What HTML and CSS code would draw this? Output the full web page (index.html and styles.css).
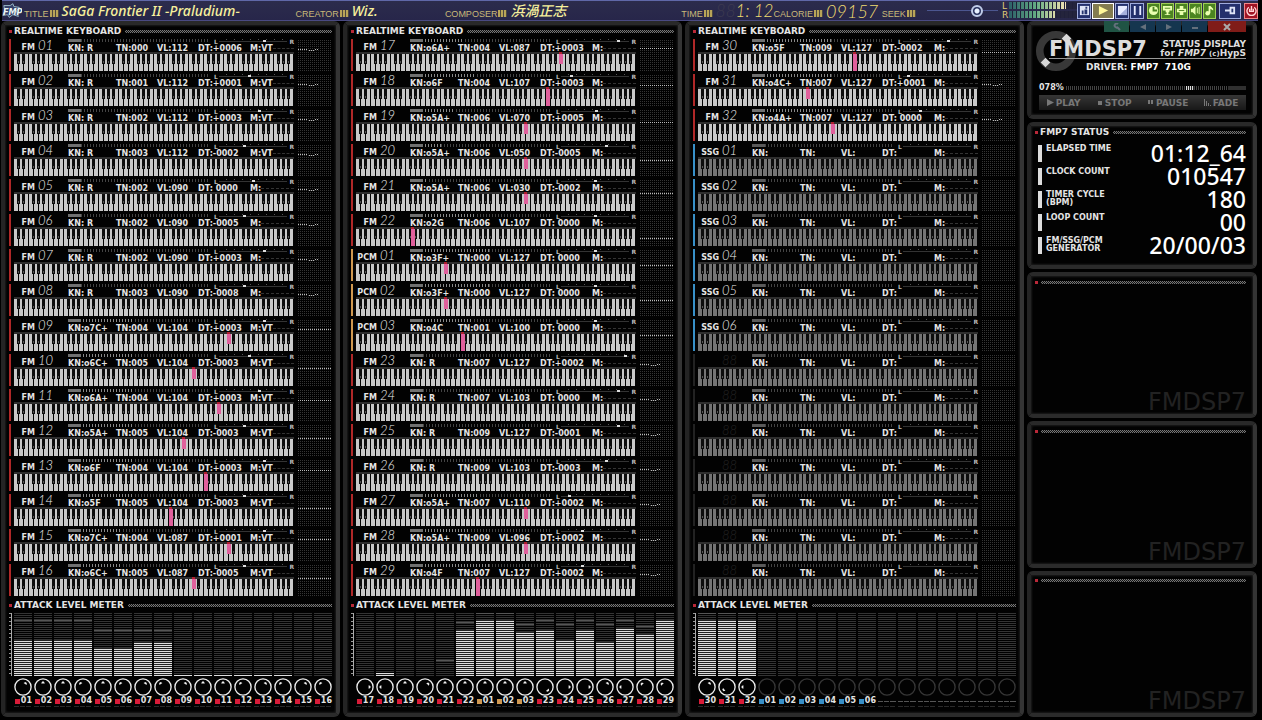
FILE: index.html
```
<!doctype html>
<html lang="en">
<head>
<meta charset="utf-8">
<title>FMDSP7</title>
<link rel="stylesheet" href="styles.css">
</head>
<body>
<svg class="defs" aria-hidden="true">
	<defs>
		<!-- one octave, 7 white keys 5px each -->
		<pattern id="keys" width="35" height="17" patternUnits="userSpaceOnUse">
			<path fill="#c8c8c8" d="M0 0h4v17h-4zM5 0h4v17h-4zM10 0h4v17h-4zM15 0h4v17h-4zM20 0h4v17h-4zM25 0h4v17h-4zM30 0h4v17h-4z"/>
			<path fill="#0c0c0c" d="M3 0h3v10h-3zM8 0h3v10h-3zM18 0h3v10h-3zM23 0h3v10h-3zM28 0h3v10h-3z"/>
			<path fill="#555" d="M4 7h1v2h-1zM9 7h1v2h-1zM19 7h1v2h-1zM24 7h1v2h-1zM29 7h1v2h-1z"/>
		</pattern>
	</defs>
</svg>

<header class="topbar">
	<svg class="fmp" viewBox="0 0 22 18" aria-hidden="true">
		<path d="M2 3h7l3-2 1 3 6 1-3 4 2 6-6-2-4 3-2-3-5 1 2-5z" fill="#34406a" stroke="#9fc0cc"/>
		<text x="1" y="13">FMP</text>
	</svg>
	<div class="info title"><span class="tag">TITLE</span><i class="bars"></i><b>SaGa Frontier II −Praludium−</b></div>
	<div class="info creator"><span class="tag">CREATOR</span><i class="bars"></i><b>Wiz.</b></div>
	<div class="info composer"><span class="tag">COMPOSER</span><i class="bars"></i><b lang="ja">浜渦正志</b></div>
	<div class="info time"><span class="tag">TIME</span><i class="bars"></i><span class="lcd"><span class="ghost" aria-hidden="true">88</span>1: 12</span></div>
	<div class="info calorie"><span class="tag">CALORIE</span><i class="bars"></i><span class="lcd">09157</span></div>
	<div class="info seek"><label class="tag" for="seek">SEEK</label><i class="bars"></i><input type="range" id="seek" min="0" max="100" value="74"></div>
	<div class="lr"><span>L</span><i class="led"></i><span>R</span><i class="led short"></i></div>
	<div class="buttons">
		<button class="btn" aria-label="Info"><svg viewBox="0 0 12 12"><path d="M1 1h10v10H1z" fill="#dfe4f6"/><path d="M7 2h2v2H7zM6 5h3v5H6zM3 6h2v4H3z" fill="#26356e"/></svg></button>
		<button class="btn wide play" aria-label="Play"><svg viewBox="0 0 12 12"><path d="M1 1l10 5-10 5z" fill="#fff79a"/></svg></button>
		<button class="btn" aria-label="Stop"><svg viewBox="0 0 12 12"><path d="M1 1h10v10H1z" fill="#e8ebff"/><path d="M11 3v8H3z" fill="#a6b0dc"/></svg></button>
		<button class="btn" aria-label="Pause"><svg viewBox="0 0 12 12"><path d="M2 1h2v10H2zM8 1h2v10H8z" fill="#e8ebff"/></svg></button>
		<button class="btn green first" aria-label="Timer"><svg viewBox="0 0 12 12"><circle cx="6" cy="6" r="5" fill="#eaffb0"/><path d="M6 2v4h4" stroke="#4b8420" stroke-width="2" fill="none"/></svg></button>
		<button class="btn green" aria-label="Trophy"><svg viewBox="0 0 12 12"><path d="M1 1h10v5H8v2H4V6H1zM5 8h2v2h2v1H3v-1h2z" fill="#eaffb0"/><path d="M3 3h6v1H3z" fill="#4b8420"/></svg></button>
		<button class="btn green" aria-label="Move"><svg viewBox="0 0 12 12"><path d="M4 4V1h4v3h3v4H8v3H4V8H1V4z" fill="#eaffb0"/><path d="M3 6h6" stroke="#4b8420"/></svg></button>
		<button class="btn green" aria-label="Volume"><svg viewBox="0 0 12 12"><path d="M1 4h2l3-3v10L3 8H1z" fill="#eaffb0"/><path d="M8 3v6M10 2v8" stroke="#eaffb0"/></svg></button>
		<button class="btn green" aria-label="Note"><svg viewBox="0 0 12 12"><path d="M5 1h2l3 3v2L7 4v5H5z" fill="#eaffb0"/><circle cx="4" cy="9" r="2.5" fill="#eaffb0"/></svg></button>
		<button class="btn wide first" aria-label="Compact"><svg viewBox="0 0 12 12"><path d="M0 5h5V2h6v8H5V7H0z" fill="#dfe4f6"/><path d="M7 4h2v4H7z" fill="#26356e"/></svg></button>
		<button class="btn red first" aria-label="Power"><svg viewBox="0 0 12 12"><path d="M3 2.5a5 5 0 1 0 6 0M6 1v5M4 4v3h4V4" stroke="#ffd6d6" stroke-width="1.5" fill="none"/></svg></button>
	</div>
</header>

<main>
	<section class="panel tracks"></section>
	<section class="panel tracks"></section>
	<section class="panel tracks"></section>

	<aside>
		<section class="panel display">
			<div class="tabs">
				<button class="tab tool" aria-label="Settings"><svg viewBox="0 0 10 8"><path d="M8 7L5 4M6 1a2 2 0 1 0 0 3" stroke="currentColor" stroke-width="2" fill="none"/></svg></button>
				<button class="tab" aria-label="Previous"><svg viewBox="0 0 10 8"><path d="M8 1v6L2 4z" fill="currentColor"/></svg></button>
				<button class="tab" aria-label="Next"><svg viewBox="0 0 10 8"><path d="M2 1v6l6-3z" fill="currentColor"/></svg></button>
				<button class="tab" aria-label="Minimize"><svg viewBox="0 0 10 8"><path d="M2 4h6v2H2z" fill="currentColor"/></svg></button>
				<button class="tab close" aria-label="Close"><svg viewBox="0 0 10 8"><path d="M2 1l6 6M8 1L2 7" stroke="currentColor" stroke-width="2"/></svg></button>
			</div>
			<div class="logo">
				<svg class="ring" viewBox="0 0 44 44" aria-hidden="true">
					<circle cx="22" cy="22" r="17" fill="none" stroke="#383838" stroke-width="8"/>
					<path d="M33 4l5 5-5 5-5-5zM11 29l5 5-5 5-5-5z" fill="#d8d8d8"/>
				</svg>
				<h1>FMDSP7</h1>
				<p class="sub">STATUS DISPLAY<br>for <em>FMP7</em> <small>(c)</small>HypS</p>
			</div>
			<p class="driver">DRIVER: <b>FMP7&nbsp; 710G</b></p>
			<div class="cpu"><span>078%</span><i class="cpubar"></i></div>
			<div class="controls">
				<button><svg viewBox="0 0 7 7"><path d="M0 0v7l7-3.500z"/></svg>PLAY</button>
				<button><svg viewBox="0 0 7 7"><path d="M2 2h4v4H2z"/></svg>STOP</button>
				<button><svg viewBox="0 0 7 7"><path d="M1 1h2v4H1zM4 1h2v4H4z"/></svg>PAUSE</button>
				<button><svg viewBox="0 0 7 7"><path d="M0 0h1v7H0zM2 2h1v5H2zM4 4h1v3H4zM6 6h1v1H6z"/></svg>FADE</button>
			</div>
		</section>

		<section class="panel">
			<h2>FMP7 STATUS</h2>
			<dl class="status">
				<div><dt>ELAPSED TIME</dt><dd>01:12_64</dd></div>
				<div><dt>CLOCK COUNT</dt><dd>010547</dd></div>
				<div><dt>TIMER CYCLE<br>(BPM)</dt><dd>180</dd></div>
				<div><dt>LOOP COUNT</dt><dd>00</dd></div>
				<div><dt>FM/SSG/PCM<br>GENERATOR</dt><dd>20/00/03</dd></div>
			</dl>
		</section>

		<section class="panel empty"><h2></h2><p class="mark">FMDSP7</p></section>
		<section class="panel empty"><h2></h2><p class="mark">FMDSP7</p></section>
		<section class="panel empty"><h2></h2><p class="mark">FMDSP7</p></section>
	</aside>
</main>
<script src="app.js"></script>
</body>
</html>
```
FILE: styles.css
```
* {
	box-sizing: border-box;
}
body {
	margin: 0;
	min-height: 100vh;
	display: flex;
	flex-direction: column;
	background: #000;
	color: #e4e4e4;
	font: bold 9px/8px "DejaVu Sans", sans-serif;
}
h1, h2, p, dl, dd {
	margin: 0;
}
button {
	padding: 0;
	border: 0;
	background: none;
	color: inherit;
	font: inherit;
}
.defs {
	position: absolute;
	width: 0;
	height: 0;
}

/* top bar */
.topbar {
	display: flex;
	align-items: center;
	height: 21px;
	margin: 0 4px 0 2px;
	background: linear-gradient(#2c2c4c, #27264a);
	border-top: 1px solid #6068a8;
	border-bottom: 1px solid #4a4a82;
}
.fmp {
	width: 20px;
	height: 18px;
	margin-right: 2px;
}
.fmp text {
	font: italic bold 9px "DejaVu Sans", sans-serif;
	fill: #e8f4f4;
}
.info {
	display: flex;
	align-items: center;
	min-width: 0;
	height: 19px;
	white-space: nowrap;
}
.title { flex: 271; }
.creator { flex: 149; }
.composer { flex: 236; }
.time { flex: 92; }
.calorie { flex: 108; }
.seek { flex: 120; }
.tag {
	padding-top: 6px;
	font: 9px/10px "Liberation Sans", sans-serif;
	color: #c8b878;
}
.bars {
	flex: none;
	width: 9px;
	height: 7px;
	margin: 6px 3px 0 1px;
	background: repeating-linear-gradient(90deg, #b8a458 0 2px, #4c4640 2px 3px);
}
.info b {
	font: italic 500 14px/18px "Noto Sans", "Noto Sans CJK JP", sans-serif;
	color: #f6f09c;
}
.lcd {
	flex: 1;
	text-align: left;
	font: italic 300 18px/18px Lato, sans-serif;
	color: #f0dc70;
}
.time .lcd {
	font-size: 17px;
}
.lcd .ghost {
	color: #3c3a50;
}
.seek input {
	appearance: none;
	flex: 1;
	min-width: 0;
	height: 14px;
	margin: 0 4px 0 8px;
	background: linear-gradient(#4c5690, #4c5690) center / 100% 1px no-repeat;
}
.seek input::-webkit-slider-thumb {
	appearance: none;
	width: 12px;
	height: 12px;
	border: 2px solid #c0cce8;
	border-radius: 50%;
	background: radial-gradient(#e8f0ff 0 2px, #28305c 3px);
}
.lr {
	display: grid;
	grid-template-columns: 7px 68px;
	row-gap: 1px;
	font: 9px/8px "DejaVu Sans", sans-serif;
	color: #e0cc78;
}
.led {
	height: 7px;
	background:
		repeating-linear-gradient(90deg, transparent 0 3px, #20203a 3px 4px),
		linear-gradient(90deg, #2c6068, #64ac84 40%, #d8d8a8 75%, #f0e0b8 84%, #24243c 84%);
}
.led.short {
	background:
		repeating-linear-gradient(90deg, transparent 0 3px, #20203a 3px 4px),
		linear-gradient(90deg, #2c6068, #64ac84 40%, #d8d8a8 67%, #24243c 67%);
}
.buttons {
	display: flex;
	gap: 1px;
}
.btn {
	display: flex;
	align-items: center;
	justify-content: center;
	width: 14px;
	height: 16px;
	border: 1px solid #a0acdc;
	background: #24306c;
}
.btn svg {
	width: 11px;
	height: 11px;
}
.btn.wide { width: 22px; }
.btn.first { margin-left: 2px; }
.btn.play {
	border-color: #fff;
	background: #847c50;
}
.btn.green {
	width: 13px;
	border-color: #a0cc58;
	background: #4b8420;
}
.btn.red {
	border-color: #f08888;
	background: #a01424;
}

/* panels */
main {
	flex: 1;
	display: grid;
	grid-template-columns: 339fr 339fr 339fr 230fr;
	gap: 3px;
	padding: 0 5px 3px 1px;
}
aside {
	display: grid;
	grid-template-rows: 98px 147px 1fr 1fr 1fr;
	gap: 3px;
}
.panel {
	min-width: 0;
	padding: 0 4px;
	border: 4px solid;
	border-color: #292929 #343434 #2b2b2b #242424;
	border-radius: 6px;
	background: #020202;
	box-shadow: inset 0 0 2px 1px #1c1c1c;
}
aside .panel {
	padding-right: 7px;
}
h2 {
	display: flex;
	align-items: center;
	height: 12px;
	font-size: 9px;
	line-height: 12px;
	white-space: nowrap;
}
h2::before {
	content: "";
	width: 3px;
	height: 3px;
	margin-right: 2px;
	background: #b82838;
}
h2::after {
	content: "";
	flex: 1;
	height: 3px;
	margin-left: 4px;
	background: repeating-conic-gradient(#777 0 25%, #111 0 50%) 0 0 / 2px 2px;
}

/* channels */
.channels {
	margin-top: 2px;
}
.channel {
	display: grid;
	grid-template-columns: 2px 280px 1fr;
	column-gap: 3px;
	height: 32px;
	margin-bottom: 3px;
}
.side { background: #222; }
.FM .side, .FM i { background: #b02828; }
.PCM .side, .PCM i { background: #d09850; }
.SSG .side, .SSG i { background: #3890c8; }
.head {
	display: grid;
	grid-template-columns: 54px 1fr;
	height: 12px;
}
.ident {
	display: flex;
	height: 12px;
}
.kind {
	width: 21px;
	padding-top: 5px;
	font-size: 8px;
	text-align: right;
}
.num {
	display: grid;
	margin-left: 3px;
	font: italic 300 13px/12px Lato, sans-serif;
	color: #eee;
}
.num .ghost {
	color: #242424;
}
.gauge {
	display: flex;
	height: 5px;
	font-size: 6px;
	line-height: 5px;
	color: #bbb;
}
.level {
	width: 141px;
	height: 3px;
	margin-right: 5px;
	background:
		repeating-linear-gradient(90deg, transparent 0 1px, #000 1px 3px) 13px 0 no-repeat,
		linear-gradient(#444, #444);
}
.level b {
	display: block;
	height: 3px;
	min-width: 13px;
	background:
		linear-gradient(#707070, #707070) 0 0 / 13px 3px no-repeat,
		repeating-linear-gradient(90deg, #888 0 1px, #000 1px 3px);
}
.SSG .level b, .off .level b { opacity: .5; }
.pan {
	position: relative;
	flex: 1;
	height: 4px;
	margin: 0 2px 0 1px;
	background:
		linear-gradient(#333, #333) 0 2px / 100% 1px no-repeat,
		repeating-linear-gradient(90deg, transparent 0 7px, #555 7px 8px) 0 0 / 100% 1px no-repeat;
}
.pan b {
	position: absolute;
	top: 1px;
	width: 3px;
	height: 2px;
	background: #ddd;
}
.values {
	display: grid;
	grid-template-columns: 48px 41px 41px 52px 1fr;
	font-size: 8px;
	line-height: 9px;
	white-space: pre;
}
.fx {
	display: flex;
	align-items: center;
}
.fx::after {
	content: "";
	flex: 1;
	border-top: 1px dashed #333;
}
.rail {
	height: 2px;
	margin-top: 1px;
	background: #2e2e2e;
}
.keys {
	display: block;
	width: 280px;
	height: 19px;
	margin-top: -2px;
}
.scope {
	width: 100%;
	height: 32px;
	background:
		repeating-linear-gradient(90deg, #000 0 1px, transparent 1px 2px),
		repeating-linear-gradient(#000 0 1px, #343434 1px 2px);
}

/* attack meter */
.meter {
	display: grid;
	grid-template-columns: 3px 1fr;
	column-gap: 2px;
	margin-top: 2px;
}
.ruler {
	height: 63px;
	border-right: 1px solid #aaa;
	background: repeating-linear-gradient(#999 0 1px, #000 1px 4px);
}
.cols {
	display: grid;
	grid-template-columns: repeat(16, 1fr);
	column-gap: 2px;
}
.col {
	min-width: 0;
	font-size: 8px;
}
.bar {
	position: relative;
	display: flex;
	align-items: flex-end;
	height: 63px;
	background: repeating-linear-gradient(#343434 0 1px, #000 1px 2px);
}
.bar b {
	width: 100%;
	background: repeating-linear-gradient(0deg, #ddd 0 1px, #222 1px 2px);
}
.bar u {
	position: absolute;
	width: 100%;
	height: 1px;
	background: #555;
}
.knob {
	display: block;
	width: 100%;
	height: 20px;
	margin-top: 1px;
	color: #eee;
}
.off .knob, .SSG .knob { color: #363636; }
.name {
	display: flex;
	align-items: center;
	gap: 1px;
	height: 8px;
}
.name i {
	width: 5px;
	height: 5px;
	margin-left: 1px;
}
.col.FM i { background: #d81c38; }
.off .name {
	background: linear-gradient(90deg, #555 5px, #000 5px 6px, #555 6px 11px, #000 11px 12px, #555 12px) center / 100% 1px no-repeat;
}
.foot {
	height: 1px;
	margin-top: 1px;
	background: repeating-linear-gradient(90deg, #2a2a2a 0 5px, #000 5px 6px);
}

/* right side */
.tabs {
	display: flex;
	gap: 1px;
	justify-content: flex-end;
	height: 11px;
	margin-top: -4px;
}
.tab {
	flex: none;
	width: 25px;
	background: #15364f;
	color: #64707c;
}
.tab svg {
	display: block;
	width: 10px;
	height: 8px;
	margin: 0 auto;
}
.tab.tool { background: #205444; }
.tab.close {
	width: 38px;
	background: #801c18;
	color: #aaa;
}
.logo {
	display: flex;
	height: 38px;
	margin-top: -2px;
	color: #ddd;
}
.ring {
	flex: none;
	width: 42px;
	height: 42px;
	margin-right: -28px;
}
.logo h1 {
	z-index: 1;
	margin-top: 9px;
	font: bold 21px/20px "DejaVu Sans", sans-serif;
	height: 20px;
	border-bottom: 1px solid #999;
}
.sub {
	z-index: 1;
	flex: 1;
	height: 20px;
	margin-top: 9px;
	padding-top: 1px;
	border-bottom: 1px solid #999;
	line-height: 9px;
	text-align: right;
	white-space: nowrap;
}
.sub small {
	font-size: 7px;
}
.driver {
	margin-top: -5px;
	padding-right: 4px;
	text-align: center;
}
.driver b { color: #fff; }
.cpu {
	display: flex;
	align-items: center;
	margin: 13px 0 0 4px;
	font-size: 8px;
}
.cpubar {
	flex: 1;
	height: 4px;
	margin-left: 2px;
	background:
		linear-gradient(#303030, #303030) 100% 0 / 18px 100% no-repeat,
		repeating-linear-gradient(90deg, #ddd 0 1px, #222 1px 2px) 70% 0 / 8px 100% no-repeat,
		repeating-linear-gradient(90deg, #444 0 1px, #000 1px 2px);
}
.controls {
	display: flex;
	justify-content: space-around;
	align-items: center;
	height: 15px;
	margin: 3px 0 0 4px;
	background: linear-gradient(#363636, #181818);
	color: #777;
}
.controls svg {
	width: 7px;
	height: 7px;
	margin-right: 2px;
	fill: currentColor;
}
.status {
	margin: 7px 0 0 3px;
}
.status div {
	display: flex;
	justify-content: space-between;
	height: 17px;
	margin-bottom: 6px;
	padding-left: 4px;
	border-left: 4px solid #ddd;
	white-space: nowrap;
}
.status dt {
	font-size: 8px;
	line-height: 8px;
}
.status dd {
	font: 500 23px/17px "Noto Sans", sans-serif;
	color: #fff;
}
.empty {
	display: flex;
	flex-direction: column;
	justify-content: space-between;
}
.empty h2::after {
	margin-left: 1px;
}
.mark {
	font: 24px/24px "DejaVu Sans", sans-serif;
	text-align: right;
	color: #222;
}
```
FILE: app.js
```
// kind, number, note, tone, volume, detune, effect, pan, knob angle, meter height, peak height, scope y
var panels = [
	[
		['FM', '01', ' R', '000', '112', '+0006', 'VT', 64, 35, 36, 55, 'w'],
		['FM', '02', ' R', '001', '112', '+0001', 'VT', 42, 0, 36, 55, 'w'],
		['FM', '03', ' R', '002', '112', '+0003', 'VT', 57, 0, 36, 55, 'w'],
		['FM', '04', ' R', '003', '112', '-0002', 'VT', 35, -35, 36, 55, 'w'],
		['FM', '05', ' R', '002', '090', ' 0000', '', 48, 0, 28, 45, 'w'],
		['FM', '06', ' R', '002', '090', '-0005', '', 35, -35, 28, 45, 'w'],
		['FM', '07', ' R', '002', '090', '+0003', '', 64, 35, 34, 45, 'w'],
		['FM', '08', ' R', '003', '090', '-0008', '', 35, -35, 34, 45, 'w'],
		['FM', '09', 'o7C+', '004', '104', '+0003', 'VT', 64, 35, 1, 0, 10],
		['FM', '10', 'o6C+', '005', '104', '-0003', 'VT', 42, 0, 1, 0, 14],
		['FM', '11', 'o6A+', '004', '104', '+0003', 'VT', 57, 0, 1, 0, 11],
		['FM', '12', 'o5A+', '005', '104', '-0003', 'VT', 35, -35, 1, 0, 14],
		['FM', '13', 'o6F', '004', '104', '+0003', 'VT', 64, 35, 1, 0, 11],
		['FM', '14', 'o5F', '005', '104', '-0003', 'VT', 35, -35, 1, 0, 14],
		['FM', '15', 'o7C+', '004', '087', '+0001', 'VT', 64, 35, 0, 0, 10],
		['FM', '16', 'o6C+', '005', '087', '-0005', 'VT', 35, -35, 0, 0, 14]
	],
	[
		['FM', '17', 'o6A+', '004', '087', '+0003', '', 82, 90, 0, 0, 9],
		['FM', '18', 'o6F', '004', '107', '+0003', '', 14, -90, 3, 0, 11],
		['FM', '19', 'o5A+', '006', '070', '+0005', '', 50, 0, 0, 0, 13],
		['FM', '20', 'o5A+', '006', '050', '-0005', '', 64, 45, 0, 0, 16],
		['FM', '21', 'o5A+', '006', '030', '-0002', '', 48, 0, 0, 15, 14],
		['FM', '22', 'o2G', '006', '107', ' 0000', '', 48, 0, 46, 53, 24],
		['PCM', '01', 'o3F+', '000', '127', ' 0000', '', 48, 0, 56, 62, 16],
		['PCM', '02', 'o3F+', '000', '127', ' 0000', '', 48, 0, 56, 62, 16],
		['PCM', '03', 'o4C', '001', '100', ' 0000', '', 48, 0, 44, 51, 16],
		['FM', '23', ' R', '007', '127', '+0002', '', 92, 140, 46, 55, 'w'],
		['FM', '24', ' R', '007', '103', ' 0000', '', 82, 90, 36, 51, 'w'],
		['FM', '25', ' R', '009', '127', '-0001', '', 82, 90, 46, 55, 'w'],
		['FM', '26', ' R', '009', '103', '-0003', '', 64, 35, 34, 51, 'w'],
		['FM', '27', 'o5A+', '007', '110', '+0002', '', 10, -90, 48, 55, 'w'],
		['FM', '28', 'o5A+', '009', '096', '+0002', '', 30, -45, 42, 49, 'w'],
		['FM', '29', 'o4F', '007', '127', '+0002', '', 30, -45, 56, 62, 'w']
	],
	[
		['FM', '30', 'o5F', '009', '127', '-0002', '', 64, 35, 56, 62, 13],
		['FM', '31', 'o4C+', '007', '127', '+0001', '', 6, -130, 56, 62, 'w'],
		['FM', '32', 'o4A+', '007', '127', ' 0000', '', 24, -90, 56, 62, 'w']
	]
];

for (var s = 1; s <= 6; s++) {
	panels[2].push(['SSG', '0' + s]);
}
while (panels[2].length < 16) {
	panels[2].push(['off', '']);
}

// x of the key on the keyboard: white keys are the middle, sharps the border
var steps = {'C': 2, 'C+': 5, 'D': 7, 'D+': 10, 'E': 12, 'F': 17, 'F+': 20, 'G': 22, 'G+': 25, 'A': 27, 'A+': 30, 'B': 32};

function pressed(note) {
	if (!note || note.charAt(0) != 'o') return '';
	var name = note.slice(2);
	var x = (note.charAt(1) - 1) * 35 + steps[name] - 2;
	var h = name.length > 1 ? 10 : 17;
	return '<rect x="' + x + '" y="0" width="3" height="2" fill="#b02030"/>' +
		'<rect x="' + x + '" y="2" width="4" height="' + h + '" fill="#e0609c"/>';
}

function trace(y) {
	if (y === undefined) return '';
	var d = y == 'w' ? 'M1 10.5h10M12 11.5h5M18 10.5h4' : 'M1 ' + (y + 0.5) + 'h33';
	return '<path d="' + d + '" fill="none" stroke="#bbb" stroke-dasharray="1 1"/>';
}

function channel(c) {
	var on = c.length > 2;
	var off = c[0] == 'off';
	var lit = on && c[2] != ' R' ? Math.round(c[4] / 127 * 56) : 9;
	return '<div class="channel ' + c[0] + '"><span class="side"></span><div>' +
		'<div class="head"><div class="ident"><span class="kind">' + (off ? '' : c[0]) + '</span>' +
		'<span class="num">' + (off ? '<span class="ghost" aria-hidden="true">88</span>' : '<span>' + c[1] + '</span>') + '</span></div>' +
		'<div><div class="gauge"><span class="level"><b style="width:' + lit + '%"></b></span>L' +
		'<span class="pan">' + (on ? '<b style="left:' + c[7] + '%"></b>' : '') + '</span>R</div>' +
		'<div class="values"><span>KN:' + (c[2] || '') + '</span><span>TN:' + (c[3] || '') + '</span><span>VL:' + (c[4] || '') +
		'</span><span>DT:' + (c[5] || '') + '</span><span class="fx">M:' + (c[6] || '') + '</span></div></div></div>' +
		'<div class="rail"></div><svg class="keys"><g transform="translate(0 2)"><rect width="280" height="17" fill="url(#' + (on ? 'keys' : 'keysDim') + ')"/></g>' + pressed(c[2]) + '</svg></div>' +
		'<svg class="scope">' + trace(c[11]) + '</svg></div>';
}

function column(c) {
	var on = c.length > 2;
	return '<div class="col ' + c[0] + '"><div class="bar">' +
		(on ? '<b style="height:' + c[9] + 'px"></b>' : '') +
		(c[10] ? '<u style="bottom:' + c[10] + 'px"></u>' : '') + '</div>' +
		'<svg class="knob" viewBox="0 0 20 20"><circle cx="10" cy="10" r="9" fill="none" stroke="currentColor" stroke-width="1.5"/>' +
		(on ? '<path d="M8 6l1-2h2l1 2z" fill="currentColor" transform="rotate(' + c[8] + ' 10 10)"/>' : '') + '</svg>' +
		'<div class="name">' + (c[0] == 'off' ? '' : '<i></i>' + c[1]) + '</div><div class="foot"></div></div>';
}

// darker copy of the key pattern for unused channels
var dim = document.getElementById('keys').cloneNode(true);
dim.id = 'keysDim';
dim.firstElementChild.setAttribute('fill', '#747474');
document.querySelector('.defs defs').appendChild(dim);

var sections = document.querySelectorAll('.tracks');
for (var i = 0; i < sections.length; i++) {
	sections[i].innerHTML = '<h2>REALTIME KEYBOARD</h2><div class="channels">' + panels[i].map(channel).join('') + '</div>' +
		'<h2>ATTACK LEVEL METER</h2><div class="meter"><div class="ruler"></div><div class="cols">' + panels[i].map(column).join('') + '</div></div>';
}
```
